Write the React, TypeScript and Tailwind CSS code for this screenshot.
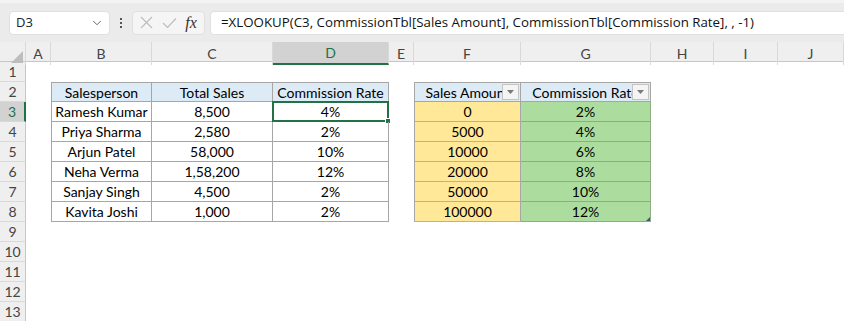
import React from 'react';
import { ChevronDown } from 'lucide-react';

const gridCols =
  'grid grid-cols-[26px_25px_101px_121px_116px_25px_107px_130px_63px_64px_66px]';

const letters = ['A', 'B', 'C', 'D', 'E', 'F', 'G', 'H', 'I', 'J'];

const people = [
  ['Ramesh Kumar', '8,500', '4%'],
  ['Priya Sharma', '2,580', '2%'],
  ['Arjun Patel', '58,000', '10%'],
  ['Neha Verma', '1,58,200', '12%'],
  ['Sanjay Singh', '4,500', '2%'],
  ['Kavita Joshi', '1,000', '2%'],
];

const tiers = [
  ['0', '2%'],
  ['5000', '4%'],
  ['10000', '6%'],
  ['20000', '8%'],
  ['50000', '10%'],
  ['100000', '12%'],
];

const FilterButton = () => (
  <div className="absolute right-[1px] top-[1px] w-[17px] h-[16px] bg-[#f4f4f4] border border-[#c3c3c3] flex items-center justify-center">
    <svg width="7" height="4" viewBox="0 0 7 4">
      <path d="M0 0 L7 0 L3.5 4 Z" fill="#7a7a7a" />
    </svg>
  </div>
);

const RowHeader = ({ n, active }: { n: number; active?: boolean }) => (
  <div
    className={`h-[20px] flex items-center justify-center text-[14px] border-b border-[#d9d9d9] ${
      active
        ? 'bg-[#d2d2d2] text-[#217346] border-r-2 border-r-[#217346]'
        : 'bg-[#efefef] text-[#444] border-r border-r-[#c6c6c6]'
    }`}
  >
    {n}
  </div>
);

const Empty = () => <div className="h-[20px]" />;

const cell = 'h-[20px] flex items-center justify-center overflow-hidden whitespace-nowrap';

const App = () => {
  const rows: React.ReactNode[] = [];

  for (let r = 1; r <= 13; r++) {
    const i = r - 3;
    let b: React.ReactNode = <Empty />;
    let c: React.ReactNode = <Empty />;
    let d: React.ReactNode = <Empty />;
    let f: React.ReactNode = <Empty />;
    let g: React.ReactNode = <Empty />;

    if (r === 2) {
      b = <div className={`${cell} bg-[#ddebf7] border border-[#a6a6a6]`}>Salesperson</div>;
      c = <div className={`${cell} bg-[#ddebf7] border-y border-r border-[#a6a6a6]`}>Total Sales</div>;
      d = <div className={`${cell} bg-[#ddebf7] border-y border-r border-[#a6a6a6]`}>Commission Rate</div>;
      f = (
        <div className={`${cell} relative bg-[#ddebf7] border border-[#a6a6a6]`}>
          Sales Amount
          <FilterButton />
        </div>
      );
      g = (
        <div className={`${cell} relative bg-[#ddebf7] border-y border-r border-[#a6a6a6]`}>
          Commission Rate
          <FilterButton />
        </div>
      );
    } else if (r >= 3 && r <= 8) {
      const p = people[i];
      const t = tiers[i];
      b = <div className={`${cell} border-l border-r border-b border-[#a6a6a6]`}>{p[0]}</div>;
      c = <div className={`${cell} border-r border-b border-[#a6a6a6]`}>{p[1]}</div>;
      d = (
        <div className={`${cell} relative border-r border-b border-[#a6a6a6] overflow-visible`}>
          {p[2]}
          {r === 3 && (
            <div className="absolute -left-[1px] -top-[1px] -right-[1px] -bottom-[1px] border-2 border-[#217346]">
              <div className="absolute -right-[4px] -bottom-[4px] w-[6px] h-[6px] bg-[#217346] border border-white" />
            </div>
          )}
        </div>
      );
      f = (
        <div className={`${cell} bg-[#ffe897] border-l border-r border-b border-l-[#a6a6a6] border-r-[#a6a6a6] border-b-[#bdb385]`}>
          {t[0]}
        </div>
      );
      g = (
        <div className={`${cell} relative bg-[#addd9e] border-r border-b border-r-[#8fae85] border-b-[#89b07c] overflow-visible`}>
          {t[1]}
          {r === 8 && (
            <svg className="absolute right-0 bottom-0" width="4" height="4" viewBox="0 0 4 4">
              <path d="M4 0 L4 4 L0 4 Z" fill="#3c5a7a" />
            </svg>
          )}
        </div>
      );
    }

    rows.push(
      <div key={r} className={gridCols}>
        <RowHeader n={r} active={r === 3} />
        <Empty />
        {b}
        {c}
        {d}
        <Empty />
        {f}
        {g}
        <Empty />
        <Empty />
        <Empty />
      </div>
    );
  }

  return (
    <div className="w-[844px] h-[321px] overflow-hidden bg-white font-['Lato',sans-serif] text-[14px] text-black">
      {/* formula bar */}
      <div className="h-[42px] bg-[#ebebeb] border-t-[3px] border-[#f3f3f3] flex items-center font-['Open_Sans',sans-serif]">
        <div className="ml-[9px] w-[101px] h-[24px] bg-white rounded-[4px] border border-[#e0e0e0] flex items-center justify-between pl-[6px] pr-[5px] text-[13px] text-[#222]">
          <span>D3</span>
          <ChevronDown size={14} strokeWidth={1.5} color="#555" />
        </div>
        <div className="w-[22px] flex flex-col items-center gap-[2px]">
          <div className="w-[2px] h-[2px] bg-[#555]" />
          <div className="w-[2px] h-[2px] bg-[#555]" />
          <div className="w-[2px] h-[2px] bg-[#555]" />
        </div>
        <div className="w-[73px] h-[24px] bg-[#f5f5f5] rounded-[4px] border border-[#e0e0e0] flex items-center justify-around px-[3px]">
          <svg width="13" height="13" viewBox="0 0 13 13">
            <path d="M1 1 L12 12 M12 1 L1 12" stroke="#bdbdbd" strokeWidth="1.2" />
          </svg>
          <svg width="15" height="12" viewBox="0 0 15 12">
            <path d="M1 6 L5.5 10.5 L14 1.5" stroke="#bdbdbd" strokeWidth="1.2" fill="none" />
          </svg>
          <span className="italic font-['Liberation_Serif',serif] text-[16px] text-[#333] leading-none">fx</span>
        </div>
        <div className="ml-[5px] flex-1 h-[24px] bg-white rounded-l-[4px] border border-r-0 border-[#e0e0e0] flex items-center pl-[10px] text-[13.3px] text-[#111] whitespace-nowrap overflow-hidden">
          =XLOOKUP(C3, CommissionTbl[Sales Amount], CommissionTbl[Commission Rate], , -1)
        </div>
      </div>

      {/* column headers */}
      <div className={`${gridCols} h-[20px] bg-[#efefef] border-b border-[#c6c6c6] text-[14px] text-[#444]`}>
        <div className="relative border-r border-[#d9d9d9]">
          <svg className="absolute right-[2px] bottom-[2px]" width="12" height="12" viewBox="0 0 12 12">
            <path d="M12 0 L12 12 L0 12 Z" fill="#bdbdbd" />
          </svg>
        </div>
        {letters.map((l) => (
          <div
            key={l}
            className={`flex items-center justify-center border-r border-[#d9d9d9] ${
              l === 'D' ? 'bg-[#d2d2d2] border-b-2 border-b-[#217346] text-[#217346]' : ''
            }`}
          >
            {l}
          </div>
        ))}
        <div />
      </div>

      {rows}
    </div>
  );
};

export default App;
